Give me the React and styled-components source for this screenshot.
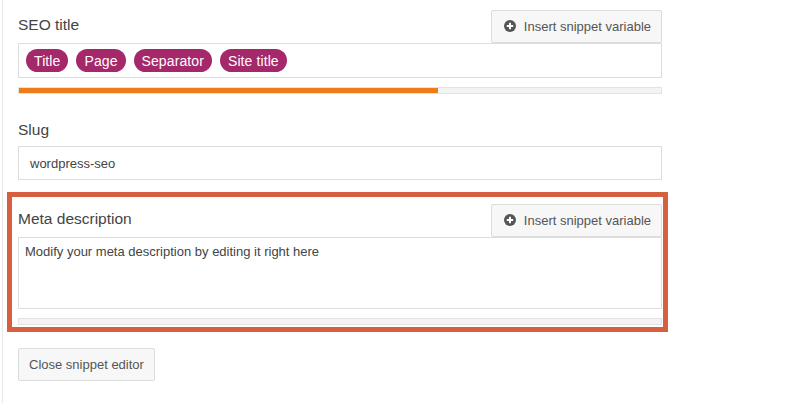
import React from 'react';
import styled, { createGlobalStyle } from 'styled-components';

const GlobalStyle = createGlobalStyle`
  body {
    margin: 0;
    padding: 0;
    background: #fff;
    font-family: 'Liberation Sans', Arial, sans-serif;
  }
`;

const Page = styled.div`
  min-height: 100vh;
  margin-left: 2px;
  border-left: 1px solid #e8e8e8;
  box-sizing: border-box;
  padding: 9px 0 0 15px;
`;

const Editor = styled.div`
  width: 644px;
  display: flex;
  flex-direction: column;
`;

const Field = styled.div`
  position: relative;
  display: flex;
  flex-direction: column;
  margin-top: ${(p) => p.$top || 0}px;
`;

const Header = styled.div`
  display: flex;
  align-items: center;
  justify-content: space-between;
  height: 34px;
`;

const Label = styled.div`
  font-size: 15.5px;
  color: #444;
  line-height: 18px;
  padding-bottom: ${(p) => (p.$plain ? 0 : 3)}px;
  margin-bottom: ${(p) => (p.$plain ? 7 : 0)}px;
`;

const Button = styled.button`
  display: inline-flex;
  align-items: center;
  gap: 8px;
  height: 33px;
  box-sizing: border-box;
  padding: 0 10px 0 ${(p) => (p.$icon ? 12 : 10)}px;
  background: #f7f7f7;
  border: 1px solid #dcdcdc;
  border-radius: 2px;
  color: #555;
  font-family: 'Liberation Sans', Arial, sans-serif;
  font-size: 13px;
  cursor: pointer;
  align-self: ${(p) => (p.$start ? 'flex-start' : 'auto')};
  margin-top: ${(p) => p.$top || 0}px;
`;

const Box = styled.div`
  box-sizing: border-box;
  border: 1px solid #ddd;
  background: #fff;
  height: ${(p) => p.$h}px;
  padding: ${(p) => p.$pad};
  display: flex;
  align-items: ${(p) => (p.$top ? 'flex-start' : 'center')};
  gap: 8px;
  color: #444;
  font-size: 13px;
`;

const Pill = styled.span`
  display: inline-flex;
  align-items: center;
  height: 23px;
  padding: 0 8px;
  border-radius: 12px;
  background: #a4286a;
  color: #fff;
  font-size: 14px;
  letter-spacing: 0.1px;
`;

const Progress = styled.div`
  margin-top: 9px;
  height: 7px;
  box-sizing: border-box;
  background: #f3f3f3;
  border: 1px solid #e3e3e3;
  overflow: hidden;
`;

const Fill = styled.div`
  height: 100%;
  background: #ee7c1b;
`;

const Highlight = styled.div`
  position: absolute;
  top: -11px;
  left: -11px;
  right: -6px;
  bottom: -7px;
  border: 5px solid #d4603f;
  pointer-events: none;
`;

const PlusIcon = () => (
  <svg width="12" height="12" viewBox="0 0 12 12">
    <circle cx="6" cy="6" r="6" fill="#555" />
    <rect x="2.8" y="5" width="6.4" height="2" fill="#fff" />
    <rect x="5" y="2.8" width="2" height="6.4" fill="#fff" />
  </svg>
);

export default function App() {
  return (
    <>
      <GlobalStyle />
      <Page>
        <Editor>
          <Field>
            <Header>
              <Label>SEO title</Label>
              <Button $icon>
                <PlusIcon />
                Insert snippet variable
              </Button>
            </Header>
            <Box $h={35} $pad="0 7px">
              <Pill>Title</Pill>
              <Pill>Page</Pill>
              <Pill>Separator</Pill>
              <Pill>Site title</Pill>
            </Box>
            <Progress>
              <Fill style={{ width: `${(420 / 644) * 100}%` }} />
            </Progress>
          </Field>

          <Field $top={27}>
            <Label $plain>Slug</Label>
            <Box $h={34} $pad="0 11px">wordpress-seo</Box>
          </Field>

          <Field $top={23}>
            <Highlight />
            <Header>
              <Label>Meta description</Label>
              <Button $icon>
                <PlusIcon />
                Insert snippet variable
              </Button>
            </Header>
            <Box $h={72} $pad="6px 6px" $top>
              Modify your meta description by editing it right here
            </Box>
            <Progress>
              <Fill style={{ width: '0%' }} />
            </Progress>
          </Field>

          <Button $start $top={23}>Close snippet editor</Button>
        </Editor>
      </Page>
    </>
  );
}
